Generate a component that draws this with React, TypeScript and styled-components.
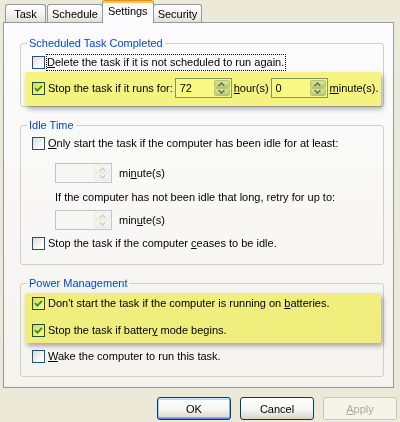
import React from 'react';
import styled, { createGlobalStyle, css } from 'styled-components';

const GlobalStyle = createGlobalStyle`
  html, body {
    margin: 0;
    padding: 0;
  }
  body {
    background: #ece9d8;
    font-family: "Liberation Sans", Arial, sans-serif;
    font-size: 11px;
    color: #000;
  }
`;

const Dialog = styled.div`
  width: 400px;
  height: 422px;
  overflow: hidden;
  background: #ece9d8;
`;

const TabStrip = styled.div`
  display: flex;
  align-items: flex-end;
  height: 22px;
  padding-left: 5px;
  position: relative;
  z-index: 1;
`;

const Tab = styled.div<{ $active?: boolean }>`
  box-sizing: border-box;
  height: 18px;
  min-width: 41px;
  padding: 0 4px;
  line-height: 18px;
  text-align: center;
  border: 1px solid #919b9c;
  border-bottom: none;
  border-radius: 3px 3px 0 0;
  background: linear-gradient(#fefefe, #f4f3ee 55%, #e3e1d6);
  margin-right: 1px;

  ${p =>
    p.$active &&
    css`
      height: 23px;
      line-height: 20px;
      margin: 0 -1px -1px -2px;
      padding: 0 5px;
      border-top: 1px solid #e68b2c;
      background: #fcfcfe;
      box-shadow: inset 0 2px 0 #ffc73c;
      position: relative;
      z-index: 2;
    `}
`;

const Panel = styled.div`
  box-sizing: border-box;
  margin-left: 3px;
  width: 391px;
  height: 366px;
  border: 1px solid #919b9c;
  background: linear-gradient(#fcfcfe, #f4f3ee);
  padding: 14px 9px 0 16px;
  display: flex;
  flex-direction: column;
`;

const Group = styled.fieldset<{ $gapTop?: number; $padBottom?: number }>`
  margin: ${p => p.$gapTop ?? 0}px 0 0 0;
  border: 1px solid #d0d0bf;
  border-radius: 3px;
  padding: 0 0 ${p => p.$padBottom ?? 0}px 11px;
  min-width: 0;
  display: flex;
  flex-direction: column;
`;

const Legend = styled.legend`
  color: #0046d5;
  padding: 0 2px;
  margin-left: -5px;
  line-height: 12px;
  font-size: 11px;
`;

const Row = styled.div<{ $top?: number; $indent?: number }>`
  display: flex;
  align-items: center;
  height: 20px;
  margin-top: ${p => p.$top ?? 0}px;
  padding-left: ${p => p.$indent ?? 0}px;
  white-space: nowrap;
`;

const Note = styled.div<{ $top?: number }>`
  line-height: 14px;
  margin-top: ${p => p.$top ?? 0}px;
  padding-left: 23px;
  white-space: nowrap;
`;

const Highlight = styled.div<{ $top?: number; $padTop: number; $padBottom: number; $gap?: number }>`
  position: relative;
  display: flex;
  flex-direction: column;
  gap: ${p => p.$gap ?? 0}px;
  margin: ${p => p.$top ?? 0}px 2px 0 -7px;
  padding: ${p => p.$padTop}px 0 ${p => p.$padBottom}px 7px;
  border-radius: 2px;
  box-shadow: 2px 3px 5px rgba(0, 0, 0, 0.32);

  &::after {
    content: '';
    position: absolute;
    inset: 0;
    border-radius: 2px;
    background: #f9f883;
    mix-blend-mode: multiply;
    pointer-events: none;
  }
`;

const Box = styled.span`
  box-sizing: border-box;
  flex: none;
  width: 13px;
  height: 13px;
  margin-right: 3px;
  border: 1px solid #1c5180;
  background: linear-gradient(135deg, #dcdcd7, #fdfdfc 80%);
  display: flex;
  align-items: center;
  justify-content: center;
`;

const Focus = styled.span`
  outline: 1px dotted #000;
  outline-offset: 0;
  padding: 1px 1px 2px 0;
  margin-left: -1px;
`;

const Key = styled.u`
  text-decoration-thickness: 1px;
  text-underline-offset: 1px;
`;

const Spin = styled.div<{ $disabled?: boolean }>`
  box-sizing: border-box;
  flex: none;
  width: 57px;
  height: 20px;
  margin: 0 ${p => (p.$disabled ? 7 : 2)}px 0 ${p => (p.$disabled ? 0 : 2)}px;
  border: 1px solid ${p => (p.$disabled ? '#b9c6d8' : '#7f9db9')};
  background: ${p => (p.$disabled ? '#f6f6f3' : '#fff')};
  display: flex;
`;

const SpinValue = styled.span`
  flex: 1;
  padding-left: 4px;
  line-height: 18px;
`;

const SpinButtons = styled.div`
  width: 16px;
  padding: 1px;
  display: flex;
  flex-direction: column;
`;

const SpinButton = styled.div<{ $disabled?: boolean }>`
  flex: 1;
  border-radius: 2px;
  border: 1px solid ${p => (p.$disabled ? '#ecebe4' : '#b7c9f2')};
  background: ${p =>
    p.$disabled
      ? 'linear-gradient(#f7f7f4, #eeede7)'
      : 'linear-gradient(#e4ecfd, #bccff7)'};
  display: flex;
  align-items: center;
  justify-content: center;
`;

const ButtonBar = styled.div`
  display: flex;
  justify-content: flex-end;
  gap: 9px;
  margin-top: 9px;
  padding-right: 3px;
`;

const Button = styled.button<{ $default?: boolean }>`
  box-sizing: border-box;
  width: 74px;
  height: 23px;
  padding: 0;
  font: inherit;
  color: #000;
  border: 1px solid #003c74;
  border-radius: 3px;
  background: linear-gradient(#ffffff, #f4f4f0 55%, #e3e0d6 85%, #d6d0c5);
  ${p =>
    p.$default &&
    css`
      box-shadow: inset 0 1px 0 #cee7ff, inset 0 -1px 0 #6982ee, inset 1px 0 0 #b1c9f5,
        inset -1px 0 0 #8eaef0, inset 0 2px 0 #bcd4f6, inset 0 -2px 0 #89ade4;
    `}

  &:disabled {
    border-color: #c9c7ba;
    background: #f5f4ea;
    color: #aca899;
  }
`;

const Check = () => (
  <svg width="9" height="9" viewBox="0 0 9 9">
    <polyline points="1,4.2 3.4,6.6 8,1.8" fill="none" stroke="#21a121" strokeWidth="1.9" />
  </svg>
);

const CheckBox = ({ checked }: { checked?: boolean }) => <Box>{checked && <Check />}</Box>;

const Arrow = ({ up, color }: { up?: boolean; color: string }) => (
  <svg width="7" height="4" viewBox="0 0 7 4">
    {up ? (
      <polygon points="0,4 3.5,0 7,4 5.5,4 3.5,1.8 1.5,4" fill={color} />
    ) : (
      <polygon points="0,0 3.5,4 7,0 5.5,0 3.5,2.2 1.5,0" fill={color} />
    )}
  </svg>
);

const SpinBox = ({ value, disabled }: { value?: string; disabled?: boolean }) => {
  const color = disabled ? '#c9c8c0' : '#4d6185';
  return (
    <Spin $disabled={disabled}>
      <SpinValue>{value}</SpinValue>
      <SpinButtons>
        <SpinButton $disabled={disabled}>
          <Arrow up color={color} />
        </SpinButton>
        <SpinButton $disabled={disabled}>
          <Arrow color={color} />
        </SpinButton>
      </SpinButtons>
    </Spin>
  );
};

export default function App() {
  return (
    <Dialog>
      <GlobalStyle />
      <TabStrip>
        <Tab>Task</Tab>
        <Tab>Schedule</Tab>
        <Tab $active>Settings</Tab>
        <Tab>Security</Tab>
      </TabStrip>

      <Panel>
        <Group>
          <Legend>Scheduled Task Completed</Legend>
          <Row $top={3}>
            <CheckBox />
            <Focus>
              <Key>D</Key>elete the task if it is not scheduled to run again.
            </Focus>
          </Row>
          <Highlight $padTop={6} $padBottom={8}>
            <Row>
              <CheckBox checked />
              <span>Stop the task if it runs for:</span>
              <SpinBox value="72" />
              <span>
                <Key>h</Key>our(s)
              </span>
              <SpinBox value="0" />
              <span>
                <Key>m</Key>inute(s).
              </span>
            </Row>
          </Highlight>
        </Group>

        <Group $gapTop={12} $padBottom={11}>
          <Legend>Idle Time</Legend>
          <Row $top={2}>
            <CheckBox />
            <span>
              <Key>O</Key>nly start the task if the computer has been idle for at least:
            </span>
          </Row>
          <Row $top={10} $indent={23}>
            <SpinBox disabled />
            <span>
              mi<Key>n</Key>ute(s)
            </span>
          </Row>
          <Note $top={7}>If the computer has not been idle that long, retry for up to:</Note>
          <Row $top={6} $indent={23}>
            <SpinBox disabled />
            <span>
              min<Key>u</Key>te(s)
            </span>
          </Row>
          <Row $top={3}>
            <CheckBox />
            <span>
              Stop the task if the computer <Key>c</Key>eases to be idle.
            </span>
          </Row>
        </Group>

        <Group $gapTop={12} $padBottom={10}>
          <Legend>Power Management</Legend>
          <Highlight $top={4} $padTop={0} $padBottom={3} $gap={7}>
            <Row>
              <CheckBox checked />
              <span>
                Don't start the task if the computer is running on <Key>b</Key>atteries.
              </span>
            </Row>
            <Row>
              <CheckBox checked />
              <span>
                Stop the task if batter<Key>y</Key> mode begins.
              </span>
            </Row>
          </Highlight>
          <Row $top={3}>
            <CheckBox />
            <span>
              <Key>W</Key>ake the computer to run this task.
            </span>
          </Row>
        </Group>
      </Panel>

      <ButtonBar>
        <Button $default>OK</Button>
        <Button>Cancel</Button>
        <Button disabled>
          <Key>A</Key>pply
        </Button>
      </ButtonBar>
    </Dialog>
  );
}
